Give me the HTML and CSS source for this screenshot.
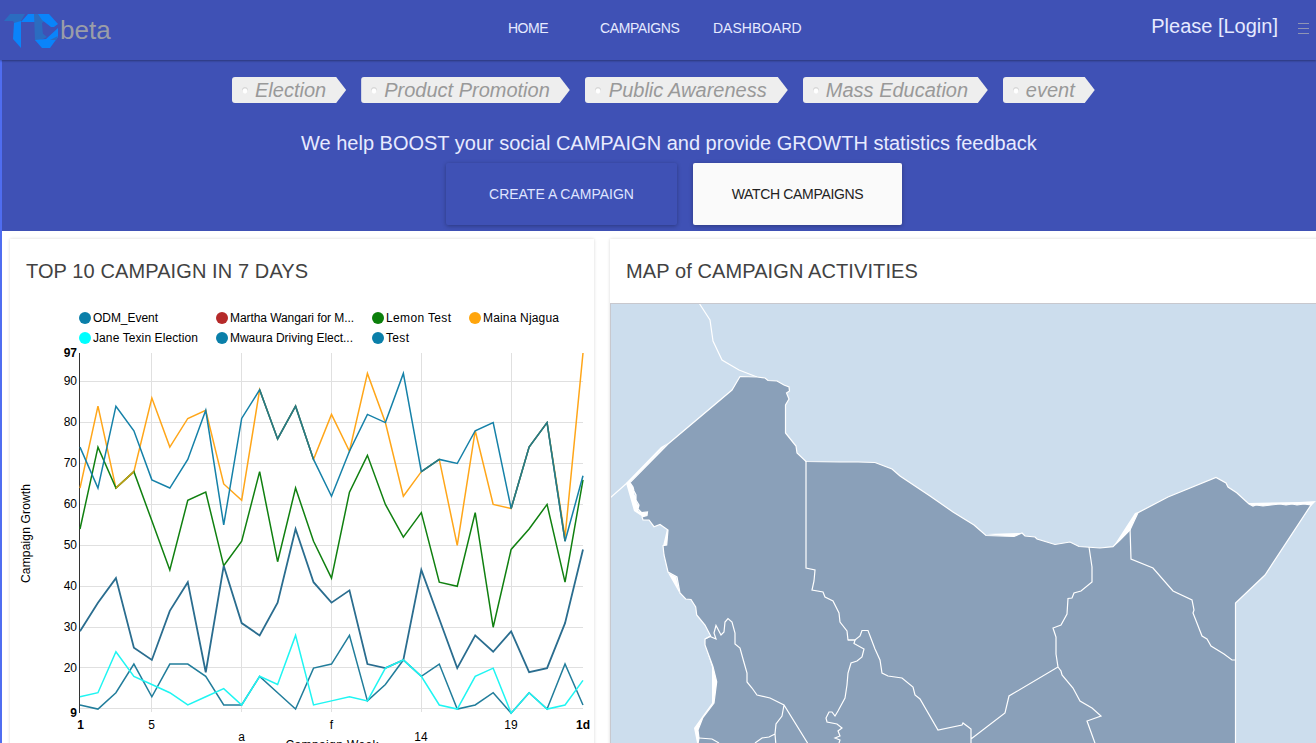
FILE: index.html
```html
<!DOCTYPE html>
<html lang="en">
<head>
<meta charset="utf-8">
<title>TC beta</title>
<link rel="stylesheet" href="styles.css">
</head>
<body>
<header class="topbar">
  <div class="brand">
    <svg class="logo" width="56" height="36" viewBox="0 0 56 36">
      <path fill="#2b6cc0" d="M0 8 6 1H21L17 8V11H11L9 8z"/>
      <path fill="#0a84fa" d="M10 10 17 8V35L9 26z"/>
      <path fill="#0a84fa" d="M17 9 24 1H31V9z"/>
      <path fill="#2b6cc0" d="M30 1H38L43 6 38 10 39 22 31 28z"/>
      <path fill="#0a84fa" d="M34 1H45L54 11 50 14H47L38 7z"/>
      <path fill="#2b6cc0" d="M31 27 38 20 43 24 37 27z"/>
      <path fill="#0a84fa" d="M31 27 42 26 54 15V24L46 35H38z"/>
      <path fill="#2b6cc0" d="M46 27 54 23 52 27z"/>
    </svg>
    <span class="beta">beta</span>
  </div>
  <nav class="nav">
    <a class="nav-home">HOME</a><a class="nav-camp">CAMPAIGNS</a><a class="nav-dash">DASHBOARD</a>
  </nav>
  <div class="account">
    <span>Please [Login]</span>
    <svg width="12" height="12" viewBox="0 0 12 12"><path d="M1 .5h11M1 5.500h11M1 10.500h11" stroke="#8f95b4"/></svg>
  </div>
</header>
<main class="page">
  <section class="hero">
    <ul class="tags">
      <li>Election</li><li>Product Promotion</li><li class="tag-wide">Public Awareness</li><li class="tag-mass">Mass Education</li><li>event</li>
    </ul>
    <p class="lead">We help BOOST your social CAMPAIGN and provide GROWTH statistics feedback</p>
    <div class="actions">
      <a class="btn btn-create">CREATE A CAMPAIGN</a>
      <a class="btn btn-watch">WATCH CAMPAIGNS</a>
    </div>
  </section>
  <section class="cards">
    <article class="card card-chart">
      <h2>TOP 10 CAMPAIGN IN 7 DAYS</h2>
      <svg class="chart" width="584" height="440" viewBox="10 303 584 440">
        <g class="legend">
          <circle cx="85" cy="318" r="6" fill="#0a7fa9"/><text x="93" y="322" textLength="65">ODM_Event</text>
          <circle cx="222" cy="318" r="6" fill="#b52a2a"/><text x="230" y="322" textLength="124">Martha Wangari for M...</text>
          <circle cx="378" cy="318" r="6" fill="#0b7f0b"/><text x="386" y="322" textLength="65">Lemon Test</text>
          <circle cx="475" cy="318" r="6" fill="#ffa50c"/><text x="483" y="322" textLength="76">Maina Njagua</text>
          <circle cx="85" cy="338" r="6" fill="#00ffff"/><text x="93" y="342" textLength="105">Jane Texin Election</text>
          <circle cx="222" cy="338" r="6" fill="#0a7fa9"/><text x="230" y="342" textLength="123">Mwaura Driving Elect...</text>
          <circle cx="378" cy="338" r="6" fill="#0a7fa9"/><text x="386" y="342" textLength="23">Test</text>
        </g>
        <path class="grid" d="M80 381.5h503M80 422.5h503M80 463.5h503M80 504.5h503M80 545.5h503M80 586.5h503M80 627.5h503M80 667.5h503M80 708.5h503M151.5 353v359M241.5 353v359M331.5 353v359M421.5 353v359M511.5 353v359"/>
        <path class="axis" d="M79.5 353v360"/>
        <g class="series" transform="translate(80 750) scale(17.964 -4.093)">
          <polyline stroke="#ffa619" points="0,64 1,84 2,64 3,68 4,86 5,74 6,81 7,83 8,65 9,61 10,88 11,76 12,84 13,71 14,82 15,73 16,92 17,80 18,62 19,68 20,71 21,50 22,78 23,60 24,59 25,74 26,80 27,52 28,97"/>
          <polyline stroke="#108010" points="0,54 1,74 2,64 3,68 4,56 5,44 6,61 7,63 8,45 9,51 10,68 11,46 12,64 13,51 14,42 15,63 16,72 17,60 18,52 19,58 20,41 21,40 22,58 23,30 24,49 25,54 26,60 27,41 28,66"/>
          <polyline stroke="#c4a11a" points="2,64 3,68"/>
          <polyline stroke="#1581a8" points="0,74 1,64 2,84 3,78 4,66 5,64 6,71 7,83 8,55 9,81 10,88 11,76 12,84 13,71 14,62 15,73 16,82 17,80 18,92 19,68 20,71 21,70 22,78 23,80 24,59 25,74 26,80 27,51 28,67"/>
          <polyline stroke="#2a7a80" points="10,88 11,76 12,84 13,71"/>
          <polyline stroke="#2a7a80" points="19,68 20,71"/>
          <polyline stroke="#2a7a80" points="24,59 25,74 26,80 27,51"/>
          <polyline class="heavy" stroke="#2a6d8f" points="0,29 1,36 2,42 3,25 4,22 5,34 6,41 7,19 8,45 9,31 10,28 11,36 12,54 13,41 14,36 15,39 16,21 17,20 18,22 19,44 20,32 21,20 22,28 23,24 24,29 25,19 26,20 27,31 28,49"/>
          <polyline stroke="#217d9b" points="0,11 1,10 2,14 3,21 4,13 5,21 6,21 7,18 8,11 9,11 10,18 11,14 12,10 13,20 14,21 15,28 16,12 17,16 18,22 19,18 20,21 21,10 22,11 23,14 24,9 25,14 26,10 27,21 28,11"/>
          <polyline stroke="#1ff5f2" points="0,13 1,14 2,24 3,18 4,16 5,14 6,11 7,13 8,15 9,11 10,18 11,16 12,28 13,11 14,12 15,13 16,12 17,20 18,22 19,18 20,11 21,10 22,18 23,20 24,9 25,14 26,10 27,11 28,17"/>
        </g>
        <g class="ylab"><text class="strong" x="77" y="357">97</text><text x="77" y="385">90</text><text x="77" y="426">80</text><text x="77" y="467">70</text><text x="77" y="508">60</text><text x="77" y="549">50</text><text x="77" y="590">40</text><text x="77" y="631">30</text><text x="77" y="672">20</text><text class="strong" x="77" y="717">9</text></g>
        <g class="xlab"><text class="strong" x="80.500" y="729">1</text><text x="151.500" y="729">5</text><text x="241.500" y="741">a</text><text x="331.500" y="729">f</text><text x="421" y="741">14</text><text x="511" y="729">19</text><text class="strong" x="583" y="729">1d</text><text x="332" y="749" textLength="93">Campaign Week</text></g>
        <text class="ytitle" transform="translate(30 583) rotate(-90)" textLength="99">Campaign Growth</text>
      </svg>
    </article>
    <article class="card card-map">
      <h2>MAP of CAMPAIGN ACTIVITIES</h2>
      <svg class="map" width="706" height="440" viewBox="610 303 706 440">
        <path class="white" d="M626 483 661 447 668 443 630 482 634 488 635 491 634 494 636 497 637 504 640 506 638 511 641 512 647 511 648 516 643 517 634 511zM1113 547 1135 513 1138 512 1130 530zM986 534 1020 533 1025 536 1014 537zM663 546 667 529 669 530 667 546zM668 573 676 577 680 594zM705 645 713 666 717 682 714 703 703 718 698 730 700 743 697 743 694 728 712 703 712 667zM1249 503 1300 502 1316 501 1310 507 1249 506z"/>
        <path class="line" d="M699 303 710 320 713 341 722 360 739 370 757 377M610 498 627 483"/>
        <path class="land" d="M740 376.500 757 377 765 378 768 380.500 777 381 784 385 789 387 789.500 391 786.500 393 789 399 785.500 405V433L796 446 797 453 806 461.500 840 462 858 462 875 462.500 892 469 900 476 930 496 953 512 974 525 986 535.500 1014 536.500 1022 533 1025 536 1035 537 1037 539 1055 544.500 1070 542 1079 546.500 1100 548 1113 546.700 1120 540 1130 530 1138 512.700 1168 497 1216 477.500 1226 483 1228 487 1236.700 492.700 1249 504 1253 506 1256 505 1263 506 1271 505 1280 504 1286 505 1292 504 1297 505 1304 504 1311 505 1265 575 1235.500 603V750H697L699 738 698 730 702.700 718 714 703 716.700 681.700 713 666.700 705 645 705 639 710.700 636 705 625 696.700 615 695.700 607 691 599.500 685.700 599 680 593 677 577 668 572 664 555 663 545.700 666.700 545 668 530 660 524.500 654 526.700 649 520 643 520 642 517 647 515.500 647.500 512 641.700 512.700 638 509 639 505 636 500 636 495 634 491 633 487 630 482.500 668 444 732 390z"/>
        <path class="line" d="M806 461V568L815 570 814 581 812 590 823 592 825 597 833 601 839 613 840 622 847 631 848 640 855 640 860 636 862 630.500 868 630.500 875 649 880 660 882 673 888 676 902 678 913 687 915 695 920 699 938 730 962 725 963 723 971 729V750M971 739 1005 713 1009 696 1058 667 1056 654 1056 637 1053 628 1061 625 1067 614 1068 598.500 1072 598 1074 593 1081 591 1092 582 1092 567 1089 547M1058 667 1061 671 1062 675 1073 688 1080 701 1092 708 1101 716 1087 721 1096 746M1130 528 1131 559 1153 568 1173 591 1192 600 1194 610 1193 613 1202 636 1207 639 1211 646 1224 654 1232 660H1236"/>
        <path class="line" d="M848 640 855 640 854 643.500 864 649 862 657 857 661 851 663 848 673 847 685 845 698 838 711 835 716 832 712 829 712 826 718 827 722 837 724 842 728 838 731 840 736 835 738 840 740 838 746M705 639 710 636.500 716 639 714 633 716 625.500 721 635 724 632 725 622 728 618.500 732 622 735 633 735 644 740 648 743 659 747 673 747 682 752 688 757 695 770 698 784 705 810 747M784 705 782 716 776 724 775 734 776 746M755 743 762 738 769 737 775 734M699 738 712 739 719 743"/>
        <path d="M610 303.500h706M610.500 303v440" stroke="#c8c8ce" fill="none"/>
      </svg>
    </article>
  </section>
</main>
</body>
</html>
```

FILE: styles.css
```css
* { box-sizing: border-box; }
body {
  margin: 0;
  height: 743px;
  overflow: hidden;
  background: #fff;
  font-family: "Liberation Sans", Arial, sans-serif;
  color: #424242;
}
.topbar {
  position: relative;
  display: flex;
  align-items: flex-start;
  height: 60px;
  background: #3f51b5;
  box-shadow: 0 1px 2px rgba(0, 0, 0, .35);
  color: #e6eaff;
}
.brand { display: flex; width: 508px; padding: 13px 0 0 4px; }
.logo { flex: none; }
.beta { font-size: 26px; line-height: 34px; color: #9a9da8; }
.nav { display: flex; flex: 1; font-size: 14px; line-height: 56px; }
.nav-home { width: 92px; letter-spacing: -.5px; }
.nav-camp { width: 113px; letter-spacing: -.4px; }
.account { display: flex; padding: 14px 7px 0 0; font-size: 20px; line-height: 24px; }
.account svg { margin: 9px 0 0 19px; }
.page { border-left: 2px solid #4f6df0; height: 683px; }
.hero {
  height: 171px;
  padding-top: 17px;
  background: #3f51b5;
}
.tags {
  display: flex;
  gap: 15px;
  margin: 0;
  padding: 0 0 0 230px;
  list-style: none;
}
.tags li {
  height: 26px;
  padding: 0 20px 0 23px;
  border-radius: 3px 0 0 3px;
  background:
    radial-gradient(circle at 13px 14px, #fff 2px, transparent 3px),
    radial-gradient(circle at 13px 13px, #d8d8d8 2.5px, transparent 3.5px),
    #eee;
  clip-path: polygon(0 0, calc(100% - 10px) 0, 100% 50%, calc(100% - 10px) 100%, 0 100%);
  color: #999;
  font-size: 20px;
  font-style: italic;
  line-height: 26px;
  white-space: nowrap;
}
.tags .tag-wide { width: 203px; padding-left: 24px; }
.tags .tag-mass { width: 185px; }
.lead {
  margin: 28px 0 0 299px;
  font-size: 20px;
  line-height: 24px;
  color: #e8ebff;
  white-space: nowrap;
}
.actions { display: flex; gap: 16px; margin: 8px 0 0 444px; }
.btn {
  height: 62px;
  border-radius: 2px;
  box-shadow: 0 1px 4px rgba(0, 0, 0, .3);
  font-size: 14px;
  line-height: 62px;
  text-align: center;
}
.btn-create { width: 231px; color: #dfe4ff; }
.btn-watch { width: 209px; background: #fafafa; color: #222; letter-spacing: -.33px; }
.cards { display: flex; gap: 16px; padding: 8px 0 0 8px; }
.card {
  flex: none;
  height: 520px;
  background: #fff;
  box-shadow: 0 0 3px rgba(0, 0, 0, .16);
}
.card-chart { width: 584px; }
.card-map { width: 722px; }
.card h2 {
  height: 64px;
  margin: 0;
  padding-left: 16px;
  font-size: 20px;
  font-weight: 400;
  line-height: 64px;
  letter-spacing: .1px;
}
.chart, .map { display: block; }
.chart text { font-size: 12px; fill: #000; }
.grid { stroke: #e0e0e0; fill: none; }
.axis { stroke: #333; }
.series polyline { fill: none; stroke-width: 1.5px; vector-effect: non-scaling-stroke; }
.series .heavy { stroke-width: 1.8px; }
.ylab { text-anchor: end; }
.xlab { text-anchor: middle; }
.chart .strong { font-weight: 700; }
.map { background: #ccdded; }
.white { fill: #fff; }
.land { fill: #8aa0b9; stroke: #fff; stroke-width: 1.2; }
.line { fill: none; stroke: #fff; stroke-width: 1.2; }
```
